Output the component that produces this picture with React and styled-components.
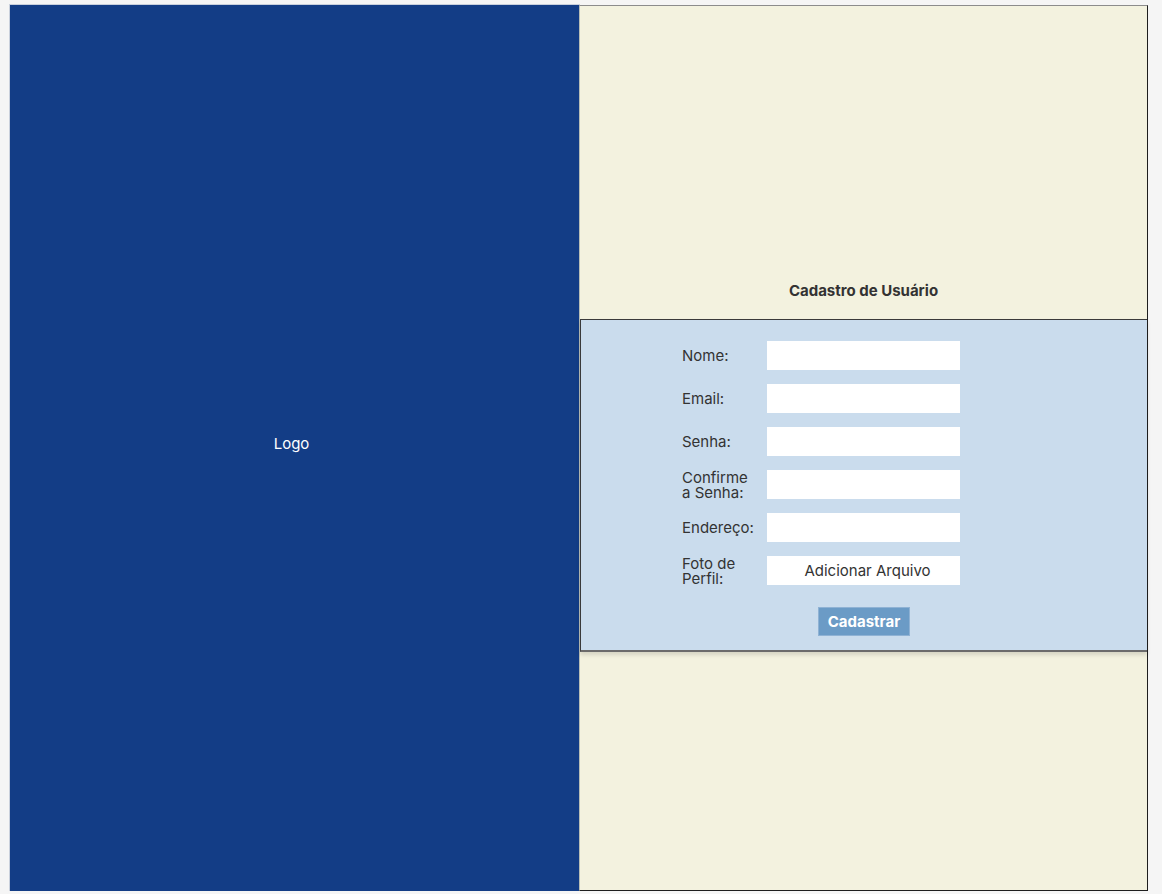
import React from "react";
import styled, { createGlobalStyle } from "styled-components";

const GlobalStyle = createGlobalStyle`
  html, body {
    margin: 0;
    padding: 0;
    background: #f5f5f5;
    font-family: "Inter", "Liberation Sans", sans-serif;
  }
`;

const fields = [
  { id: "nome", label: "Nome:" },
  { id: "email", label: "Email:" },
  { id: "senha", label: "Senha:", secret: true },
  { id: "confirme", label: "Confirme a Senha:", narrow: true, secret: true },
  { id: "endereco", label: "Endereço:" },
  { id: "foto", label: "Foto de Perfil:", narrow: true, file: true },
];

export default function App() {
  return (
    <>
      <GlobalStyle />
      <Page>
        <LogoPanel>
          <LogoText>Logo</LogoText>
        </LogoPanel>
        <SidePanel>
          <TitleArea>
            <Title>Cadastro de Usuário</Title>
          </TitleArea>
          <FormBox>
            <FormGrid>
              {fields.map((f) => (
                <React.Fragment key={f.id}>
                  <Label htmlFor={f.id} $narrow={f.narrow}>
                    {f.label}
                  </Label>
                  {f.file ? (
                    <FileButton id={f.id} type="button">
                      Adicionar Arquivo
                    </FileButton>
                  ) : (
                    <Input id={f.id} type={f.secret ? "password" : "text"} />
                  )}
                </React.Fragment>
              ))}
            </FormGrid>
            <SubmitButton type="button">Cadastrar</SubmitButton>
          </FormBox>
          <BottomArea />
        </SidePanel>
      </Page>
    </>
  );
}

const Page = styled.div`
  display: flex;
  padding: 5px 0 0 10px;
`;

const LogoPanel = styled.div`
  width: 569px;
  height: 886px;
  background: #133d86;
  box-shadow: 0 0 0 1px #c9d0dc;
  display: flex;
  align-items: center;
  justify-content: center;
`;

const LogoText = styled.span`
  color: #ffffff;
  font-size: 15px;
  margin: 0 6px 10px 0;
`;

const SidePanel = styled.div`
  width: 569px;
  height: 886px;
  box-sizing: border-box;
  background: #f3f2df;
  border: 1px solid #1e1e1e;
  border-top-color: #8c8c8c;
  border-left-color: #b9bdb5;
  display: flex;
  flex-direction: column;
`;

const TitleArea = styled.div`
  height: 313px;
  display: flex;
  align-items: flex-end;
  justify-content: center;
  padding-bottom: 19px;
  box-sizing: border-box;
`;

const Title = styled.h1`
  margin: 0;
  font-size: 15px;
  font-weight: 700;
  color: #333333;
`;

const FormBox = styled.div`
  height: 333px;
  box-sizing: border-box;
  background: #cadced;
  border-top: 1px solid #3a3a3a;
  border-bottom: 2px solid #6b6b6b;
  border-left: 1px solid #3a3a3a;
  box-shadow: 0 3px 4px rgba(0, 0, 0, 0.12);
  padding: 21px 0 0 101px;
  display: flex;
  flex-direction: column;
`;

const FormGrid = styled.div`
  display: grid;
  grid-template-columns: 85px 193px;
  grid-auto-rows: 29px;
  row-gap: 14px;
  align-items: center;
`;

const Label = styled.label`
  font-size: 15px;
  line-height: ${(p) => (p.$narrow ? "15px" : "18px")};
  color: #333333;
  padding-right: ${(p) => (p.$narrow ? "14px" : "0")};
`;

const Input = styled.input`
  width: 193px;
  height: 29px;
  box-sizing: border-box;
  border: none;
  outline: none;
  background: #ffffff;
  font-family: inherit;
`;

const FileButton = styled.button`
  width: 193px;
  height: 29px;
  border: none;
  background: #ffffff;
  font-family: inherit;
  font-size: 15px;
  color: #333333;
  padding: 0 0 0 8px;
  cursor: pointer;
`;

const SubmitButton = styled.button`
  align-self: flex-start;
  margin: 22px 0 0 136px;
  width: 92px;
  height: 29px;
  border: 1px solid #8fb2d4;
  background: #6b9bc6;
  color: #ffffff;
  font-family: inherit;
  font-weight: 700;
  font-size: 15px;
  cursor: pointer;
`;

const BottomArea = styled.div`
  flex: 1;
`;
